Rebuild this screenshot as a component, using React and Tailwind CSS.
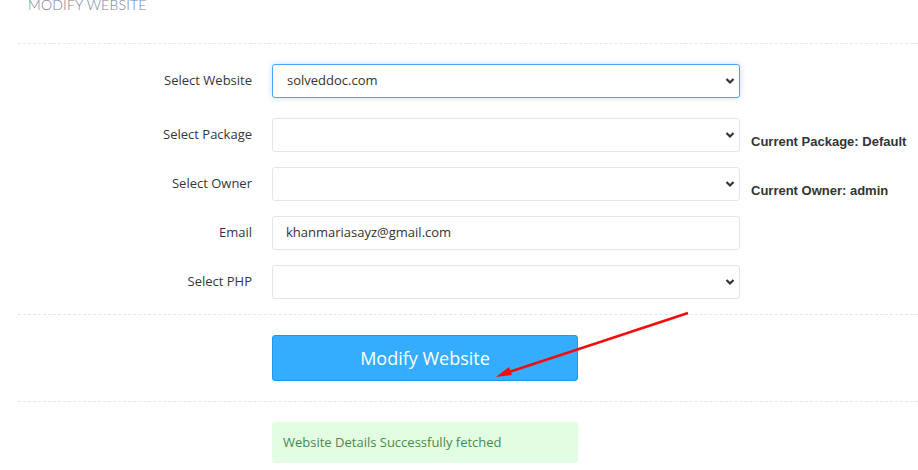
import React from "react";

const labelCls =
  "w-[254px] shrink-0 text-right text-[13px] font-medium text-[#33373d] pr-[20px]";

function Chevron() {
  return (
    <svg
      className="pointer-events-none absolute right-[4px] top-1/2 -translate-y-1/2"
      width="10"
      height="7"
      viewBox="0 0 10 7"
    >
      <path d="M1.5 1.5 L5 5 L8.5 1.5" fill="none" stroke="#333" strokeWidth="2.2" />
    </svg>
  );
}

function SelectBox({ value, active }) {
  return (
    <div
      className={
        "relative w-[468px] h-[34px] rounded-[3px] border bg-white flex items-center pl-[14px] pr-[16px] text-[13px] text-[#333] " +
        (active
          ? "border-[#4aa6f5] shadow-[0_0_6px_rgba(74,166,245,0.35)]"
          : "border-[#dfe6ee]")
      }
    >
      <span>{value}</span>
      <Chevron />
    </div>
  );
}

function Row({ label, children, side, className = "" }) {
  return (
    <div className={"flex items-center " + className}>
      <div className={labelCls}>{label}</div>
      {children}
      {side && (
        <div className="ml-[11px] pt-[13px] text-[13px] font-bold text-[#333] font-['Liberation_Sans',Arial,sans-serif] whitespace-nowrap">
          {side}
        </div>
      )}
    </div>
  );
}

export default function App() {
  return (
    <div className="relative w-[918px] h-[470px] overflow-hidden bg-white font-['Open_Sans',sans-serif]">
      <div className="-mt-[5px] pl-[28px] h-[48px] text-[14px] leading-[20px] tracking-[0.2px] font-light text-[#7a7c98] font-['Lato',sans-serif]">
        MODIFY WEBSITE
      </div>

      <div className="ml-[18px] border-t border-dashed border-[#e3e8ee] pt-[20px] pb-[15px]">
        <Row label="Select Website">
          <SelectBox value="solveddoc.com" active />
        </Row>
        <Row label="Select Package" className="mt-[20px]" side="Current Package: Default">
          <SelectBox value="" />
        </Row>
        <Row label="Select Owner" className="mt-[15px]" side="Current Owner: admin">
          <SelectBox value="" />
        </Row>
        <Row label="Email" className="mt-[15px]">
          <div className="w-[468px] h-[34px] rounded-[3px] border border-[#dfe6ee] bg-white flex items-center pl-[13px] text-[13px] text-[#333]">
            khanmariasayz@gmail.com
          </div>
        </Row>
        <Row label="Select PHP" className="mt-[15px]">
          <SelectBox value="" />
        </Row>
      </div>

      <div className="ml-[18px] border-t border-dashed border-[#e3e8ee] pt-[20px] pb-[20px]">
        <div className="pl-[254px]">
          <button className="w-[306px] h-[46px] rounded-[3px] border border-[#1b98f0] bg-[#34adff] text-white text-[18px] flex items-center justify-center">
            Modify Website
          </button>
        </div>
      </div>

      <div className="ml-[18px] border-t border-dashed border-[#e3e8ee] pt-[20px]">
        <div className="pl-[254px]">
          <div className="w-[306px] h-[41px] rounded-[3px] bg-[#e2fde2] text-[#4b8a4b] text-[13px] flex items-center pl-[11px]">
            Website Details Successfully fetched
          </div>
        </div>
      </div>

      <svg className="absolute left-0 top-0 pointer-events-none" width="918" height="470">
        <line x1="688" y1="313" x2="506" y2="373" stroke="#f20d0d" strokeWidth="2.5" />
        <polygon points="496,377 509,367 512,375" fill="#f20d0d" />
      </svg>
    </div>
  );
}
